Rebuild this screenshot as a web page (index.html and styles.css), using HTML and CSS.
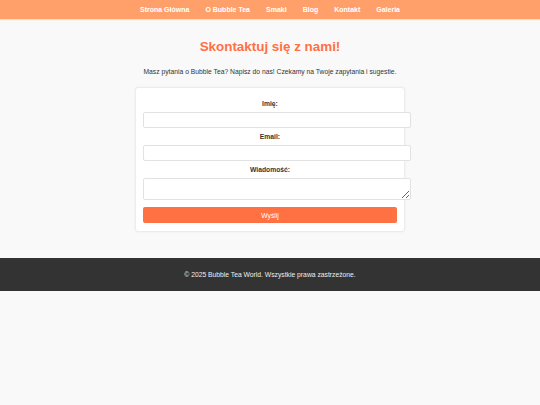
FILE: index.html
```html
<!DOCTYPE html>
<html lang="pl">
<head>
<meta charset="utf-8">
<title>Kontakt - Bubble Tea World</title>
<link rel="stylesheet" href="styles.css">
</head>
<body>
<header class="site-header">
  <nav class="nav">
    <a href="#">Strona Główna</a>
    <a href="#">O Bubble Tea</a>
    <a href="#">Smaki</a>
    <a href="#">Blog</a>
    <a href="#">Kontakt</a>
    <a href="#">Galeria</a>
  </nav>
</header>
<main class="main">
  <h1 class="title">Skontaktuj się z nami!</h1>
  <p class="intro">Masz pytania o Bubble Tea? Napisz do nas! Czekamy na Twoje zapytania i sugestie.</p>
  <form class="card">
    <label class="label" for="name">Imię:</label>
    <input class="field" id="name" type="text">
    <label class="label" for="email">Email:</label>
    <input class="field" id="email" type="email">
    <label class="label" for="msg">Wiadomość:</label>
    <textarea class="field area" id="msg"></textarea>
    <button class="btn" type="button">Wyślij</button>
  </form>
</main>
<footer class="footer">
  <p>© 2025 Bubble Tea World. Wszystkie prawa zastrzeżone.</p>
</footer>
</body>
</html>
```
FILE: styles.css
```css
* { box-sizing: border-box; }
html, body { margin: 0; padding: 0; }
body {
  background: #f9f9f9;
  font-family: "Liberation Sans", Arial, sans-serif;
  font-size: 6.75px;
  line-height: 8px;
  color: #333;
}
.site-header {
  background: #ffa06b;
  height: 19px;
  box-shadow: 0 1px 1px rgba(255, 160, 107, 0.35);
}
.nav {
  display: flex;
  justify-content: center;
  gap: 16px;
  padding-top: 5.5px;
}
.nav a {
  color: #fff;
  text-decoration: none;
  font-weight: bold;
  font-size: 7px;
}
.main {
  padding-top: 20px;
  display: flex;
  flex-direction: column;
  align-items: center;
}
.title {
  margin: 0;
  font-size: 13.4px;
  line-height: 16px;
  color: #ff7043;
  font-weight: bold;
}
.intro {
  margin: 13px 0 0;
  line-height: 8px;
}
.card {
  margin-top: 11px;
  width: 270px;
  background: #fff;
  border: 1px solid #ececec;
  border-radius: 3px;
  box-shadow: 0 0 3px rgba(0, 0, 0, 0.05);
  padding: 12px 7px 8px;
  display: flex;
  flex-direction: column;
  align-items: stretch;
}
.label {
  display: block;
  text-align: center;
  font-weight: bold;
  color: #333;
  margin-bottom: 4px;
}
.field {
  box-sizing: content-box;
  width: 100%;
  height: 14px;
  padding: 0 6px;
  margin: 0 0 5px;
  border: 1px solid #e2e2e2;
  border-radius: 2px;
  background: #fff;
  font-family: inherit;
  font-size: 6.75px;
}
.area {
  height: 20px;
  margin-bottom: 7px;
}
.btn {
  height: 16px;
  border: none;
  border-radius: 2px;
  background: #ff7043;
  color: #fff;
  font-family: inherit;
  font-size: 6.75px;
  padding: 0;
}
.footer {
  margin-top: 26px;
  background: #333;
  color: #eee;
  height: 33px;
  display: flex;
  align-items: center;
  justify-content: center;
}
.footer p { margin: 0; }
```
